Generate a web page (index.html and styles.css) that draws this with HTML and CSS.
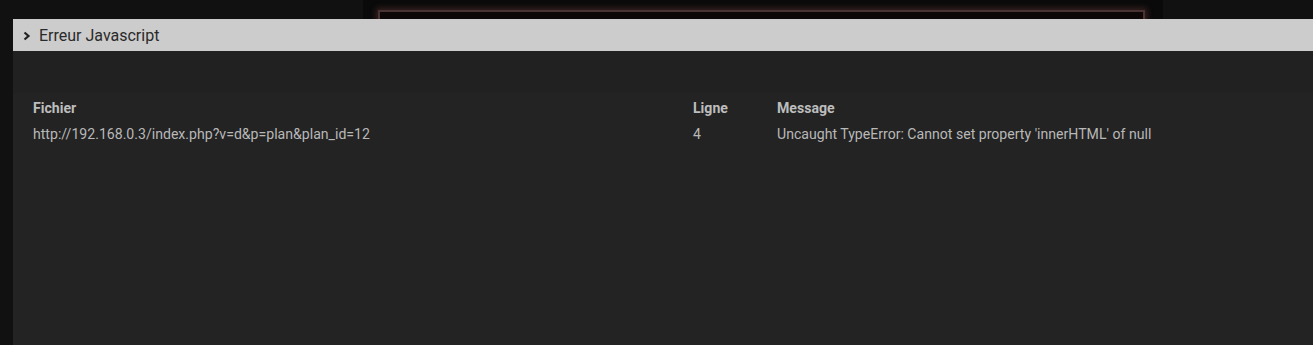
FILE: index.html
```html
<!DOCTYPE html>
<html>
  <head>
    <title>Erreur Javascript</title>
    <link rel="stylesheet" href="styles.css">
  </head>
  <body>
    <div class="backdrop">
      <div class="stage">
        <div class="frame"></div>
      </div>
    </div>

    <div class="panel">
      <div class="panel-header">
        <svg class="chevron" width="8" height="10" viewBox="0 0 8 10">
          <path d="M1.5 1.5 L5.5 5 L1.5 8.5" fill="none" stroke="#222" stroke-width="2.2"/>
        </svg>
        <span class="panel-title">Erreur Javascript</span>
      </div>
      <div class="panel-spacer"></div>
      <div class="panel-body">
        <table class="errors">
          <thead>
            <tr>
              <th class="col-file">Fichier</th>
              <th class="col-line">Ligne</th>
              <th>Message</th>
            </tr>
          </thead>
          <tbody>
            <tr>
              <td>http://192.168.0.3/index.php?v=d&amp;p=plan&amp;plan_id=12</td>
              <td>4</td>
              <td>Uncaught TypeError: Cannot set property 'innerHTML' of null</td>
            </tr>
          </tbody>
        </table>
      </div>
    </div>
  </body>
</html>
```

FILE: styles.css
```css
html, body {
  margin: 0;
  padding: 0;
  height: 100%;
  overflow: hidden;
  background-color: #111;
  font-family: Roboto, "Liberation Sans", sans-serif;
}

.backdrop {
  height: 19px;
  display: flex;
  padding-left: 363px;
  overflow: hidden;
}

.stage {
  box-sizing: border-box;
  width: 800px;
  background-color: #0a0a0a;
  padding: 12px 18px 0 15px;
}

.frame {
  height: 20px;
  background-color: #0e0707;
  border-top: 2px solid #4a3333;
  border-left: 2px solid #4a3333;
  border-right: 2px solid #4a3333;
  box-shadow: 0 0 6px 2px rgba(110, 60, 60, 0.45);
  margin-top: -2px;
}

.panel {
  margin-left: 13px;
  height: calc(100% - 19px);
  background-color: #232323;
  display: flex;
  flex-direction: column;
}

.panel-header {
  height: 32px;
  background-color: #cccccc;
  display: flex;
  align-items: center;
  padding-left: 10px;
  gap: 8px;
}

.chevron {
  margin-top: 1px;
}

.panel-title {
  font-size: 16px;
  color: #2a2a2a;
}

.panel-spacer {
  height: 42px;
  background-color: #212121;
}

.panel-body {
  flex: 1;
}

.errors {
  width: 100%;
  border-collapse: collapse;
  color: #bdbdbd;
  font-size: 14.1px;
}

.errors th {
  text-align: left;
  font-weight: bold;
  padding: 7px 20px 5px 20px;
  line-height: 16px;
}

.errors td {
  padding: 5px 20px 6px 20px;
  line-height: 16px;
  color: #b8b8b8;
}

.errors .col-file {
  width: 620px;
}

.errors .col-line {
  width: 44px;
}
```
